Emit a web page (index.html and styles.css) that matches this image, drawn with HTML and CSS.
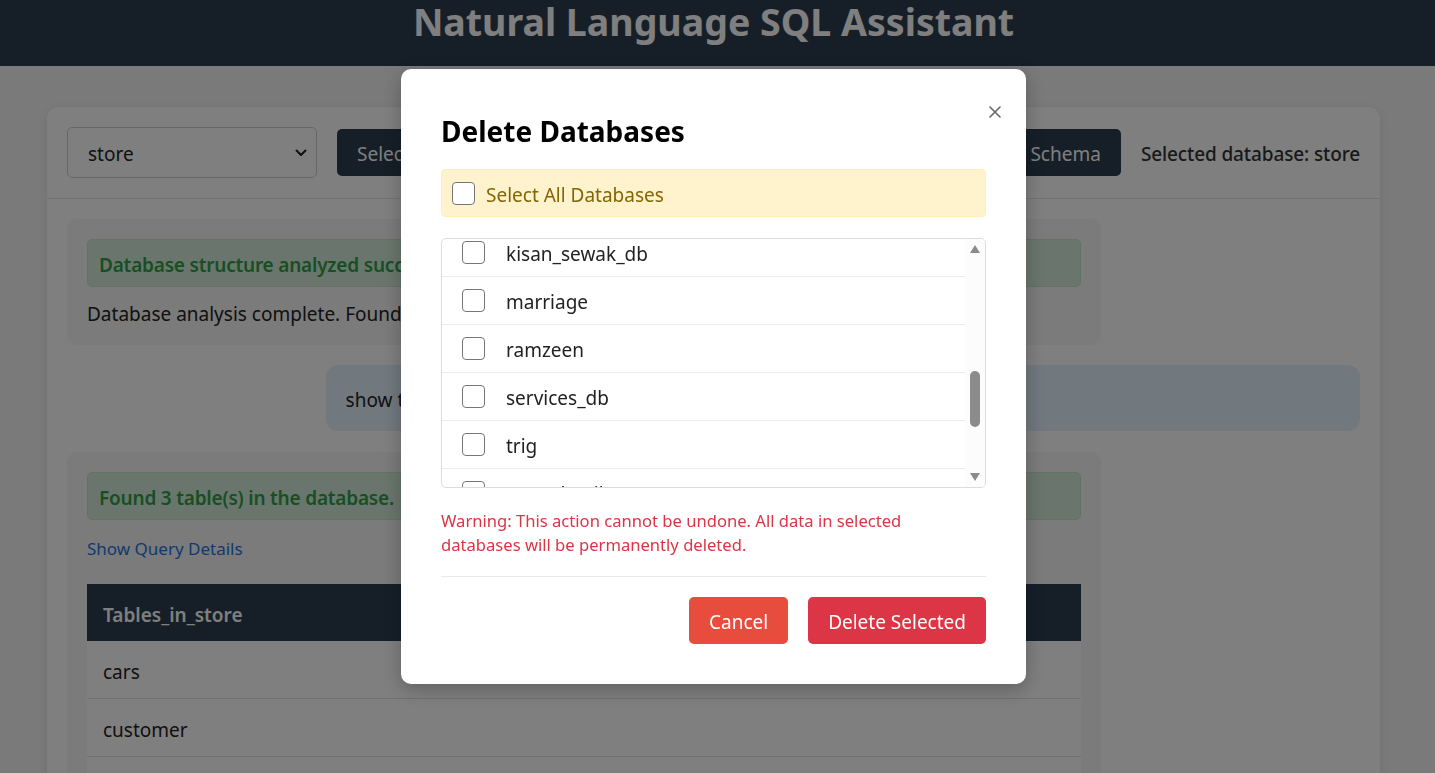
FILE: index.html
```html
<!DOCTYPE html>
<html lang="en">
<head>
<meta charset="utf-8">
<title>Natural Language SQL Assistant</title>
<link rel="stylesheet" href="styles.css">
</head>
<body>
<header class="app-header">
  <h1 class="app-title">Natural Language SQL Assistant</h1>
</header>

<main class="page">
  <section class="panel">
    <div class="toolbar">
      <div class="select-wrap">
        <select class="db-select">
          <option>store</option>
        </select>
        <svg class="select-chevron" width="12" height="8" viewBox="0 0 12 8" aria-hidden="true"><path d="M1.5 1.5 6 6l4.5-4.5" fill="none" stroke="#222" stroke-width="2" stroke-linecap="round" stroke-linejoin="round"/></svg>
      </div>
      <div class="btn-row">
        <button class="btn btn-dark">Select Database</button>
        <button class="btn btn-dark">Delete Databases</button>
        <button class="btn btn-dark btn-push">Analyze Schema</button>
      </div>
      <span class="selected-db">Selected database: store</span>
    </div>

    <div class="chat">
      <div class="msg msg-bot">
        <div class="alert alert-success">Database structure analyzed successfully.</div>
        <p class="msg-text">Database analysis complete. Found 3 tables in the database.</p>
      </div>

      <div class="msg msg-user">show tables</div>

      <div class="msg msg-bot msg-result">
        <div class="alert alert-success">Found 3 table(s) in the database.</div>
        <a class="query-link" href="#">Show Query Details</a>
        <table class="result-table">
          <thead>
            <tr><th>Tables_in_store</th></tr>
          </thead>
          <tbody>
            <tr><td>cars</td></tr>
            <tr><td>customer</td></tr>
            <tr><td>orders</td></tr>
          </tbody>
        </table>
      </div>
    </div>
  </section>
</main>

<div class="overlay">
  <div class="modal">
    <button class="modal-close" aria-label="Close">
      <svg width="12" height="12" viewBox="0 0 12 12" aria-hidden="true"><path d="M1 1l10 10M11 1 1 11" stroke="#666" stroke-width="1.6" stroke-linecap="round"/></svg>
    </button>
    <h2 class="modal-title">Delete Databases</h2>

    <label class="select-all">
      <input type="checkbox" class="check">
      <span class="label-text">Select All Databases</span>
    </label>

    <div class="db-list">
      <div class="db-viewport" id="dbViewport">
        <label class="db-item"><input type="checkbox" class="check"><span class="label-text">bank_db</span></label>
        <label class="db-item"><input type="checkbox" class="check"><span class="label-text">college</span></label>
        <label class="db-item"><input type="checkbox" class="check"><span class="label-text">company</span></label>
        <label class="db-item"><input type="checkbox" class="check"><span class="label-text">demo</span></label>
        <label class="db-item"><input type="checkbox" class="check"><span class="label-text">ecommerce</span></label>
        <label class="db-item"><input type="checkbox" class="check"><span class="label-text">employees</span></label>
        <label class="db-item"><input type="checkbox" class="check"><span class="label-text">hospital</span></label>
        <label class="db-item"><input type="checkbox" class="check"><span class="label-text">hotel</span></label>
        <label class="db-item"><input type="checkbox" class="check"><span class="label-text">inventory</span></label>
        <label class="db-item"><input type="checkbox" class="check"><span class="label-text">jobs</span></label>
        <label class="db-item"><input type="checkbox" class="check"><span class="label-text">kisan_sewak_db</span></label>
        <label class="db-item"><input type="checkbox" class="check"><span class="label-text">marriage</span></label>
        <label class="db-item"><input type="checkbox" class="check"><span class="label-text">ramzeen</span></label>
        <label class="db-item"><input type="checkbox" class="check"><span class="label-text">services_db</span></label>
        <label class="db-item"><input type="checkbox" class="check"><span class="label-text">trig</span></label>
        <label class="db-item"><input type="checkbox" class="check"><span class="label-text">user_details</span></label>
        <label class="db-item"><input type="checkbox" class="check"><span class="label-text">vehicles</span></label>
        <label class="db-item"><input type="checkbox" class="check"><span class="label-text">weather</span></label>
        <label class="db-item"><input type="checkbox" class="check"><span class="label-text">world</span></label>
      </div>
      <div class="scrollbar" aria-hidden="true">
        <span class="sb-btn"><span class="sb-arrow sb-up"></span></span>
        <div class="sb-track" id="sbTrack"><div class="sb-thumb" id="sbThumb"></div></div>
        <span class="sb-btn"><span class="sb-arrow sb-down"></span></span>
      </div>
    </div>

    <p class="warning">Warning: This action cannot be undone. All data in selected databases will be permanently deleted.</p>

    <div class="modal-footer">
      <button class="btn btn-cancel">Cancel</button>
      <button class="btn btn-delete">Delete Selected</button>
    </div>
  </div>
</div>

<script src="script.js"></script>
</body>
</html>
```

FILE: styles.css
```css
* { box-sizing: border-box; }

html, body {
  margin: 0;
  padding: 0;
}

body {
  font-family: "Noto Sans", "Open Sans", "DejaVu Sans", sans-serif;
  font-size: 19px;
  line-height: 26px;
  color: #222;
  background: #f4f4f4;
  overflow: hidden;
  height: 773px;
}

/* Header */
.app-header {
  background: #2c3e50;
  color: #fff;
  text-align: center;
  height: 66px;
  padding-right: 8px;
}
.app-title {
  margin: 0;
  font-size: 37.5px;
  line-height: 44px;
  font-weight: 700;
}

/* Page */
.page {
  padding: 41px 55px 0 47px;
}
.panel {
  background: #fff;
  border-radius: 12px;
  box-shadow: 0 2px 10px rgba(0, 0, 0, 0.08);
}

.toolbar {
  display: flex;
  align-items: center;
  gap: 20px;
  padding: 20px;
  border-bottom: 1px solid #e6e6e6;
}
.select-wrap {
  position: relative;
  width: 250px;
  height: 51px;
  flex: none;
}
.db-select {
  appearance: none;
  -webkit-appearance: none;
  width: 100%;
  height: 100%;
  padding: 2px 20px 0;
  font: inherit;
  color: #222;
  background: #fff;
  border: 1px solid #cfcfcf;
  border-radius: 5px;
}
.select-chevron {
  position: absolute;
  right: 10px;
  top: 22px;
  pointer-events: none;
}
.btn-row {
  display: flex;
  gap: 20px;
  flex: 1;
  min-width: 0;
}
.btn-push { margin-left: auto; }

.btn {
  height: 47px;
  padding: 2px 20px 0;
  border: none;
  border-radius: 5px;
  font: inherit;
  color: #fff;
  white-space: nowrap;
  cursor: pointer;
}
.btn-dark { background: #2c3e50; }
.selected-db {
  flex: none;
  padding-top: 2px;
  color: #333;
  font-weight: 500;
  letter-spacing: -0.12px;
  white-space: nowrap;
}

/* Chat */
.chat {
  display: flex;
  flex-direction: column;
  gap: 20px;
  padding: 20px;
}
.msg {
  width: 80%;
  border-radius: 10px;
  padding: 20px 20px 18px;
}
.msg-bot {
  background: #f6f6f6;
  align-self: flex-start;
}
.msg-result {
  margin-top: 1px;
}
.msg-user {
  background: #e3f2fd;
  align-self: flex-end;
  border-radius: 12px;
  padding: 22px 20px 18px;
}
.alert {
  padding: 12px 11px 8px;
  border-radius: 5px;
  font-weight: 600;
  letter-spacing: -0.2px;
}
.alert-success {
  background: #d4edda;
  border: 1px solid #c3e6cb;
  color: #2f9e47;
}
.msg-text {
  margin: 14px 0 0;
}
.query-link {
  display: block;
  margin: 16px 0 22px;
  font-size: 17px;
  color: #1f74dc;
  text-decoration: none;
  width: max-content;
}
.result-table {
  width: 100%;
  border-collapse: collapse;
  background: #fff;
}
.result-table th {
  background: #2c3e50;
  color: #fff;
  text-align: left;
  font-weight: 600;
  padding: 18px 16px 13px;
  line-height: 26px;
}
.result-table td {
  padding: 18px 16px 13px;
  border-bottom: 1px solid #e3e3e3;
  line-height: 26px;
}

/* Modal */
.overlay {
  position: fixed;
  inset: 0;
  background: rgba(0, 0, 0, 0.5);
  display: flex;
  justify-content: center;
  align-items: flex-start;
  padding: 69px 8px 0 0;
}
.modal {
  position: relative;
  width: 625px;
  background: #fff;
  border-radius: 10px;
  padding: 40px;
  box-shadow: 0 5px 20px rgba(0, 0, 0, 0.25);
}
.modal-close {
  position: absolute;
  top: 37px;
  right: 25px;
  width: 12px;
  height: 12px;
  padding: 0;
  border: none;
  background: none;
  display: flex;
  cursor: pointer;
}
.modal-title {
  margin: 5px 0 0;
  font-size: 28px;
  line-height: 34px;
  font-weight: 700;
  color: #000;
}

.select-all {
  margin-top: 21px;
  display: flex;
  align-items: center;
  gap: 11px;
  height: 48px;
  padding: 0 10px;
  background: #fff3cd;
  border: 1px solid #ffeeba;
  border-radius: 4px;
  color: #856404;
}
.label-text {
  padding-top: 3px;
}

.check {
  appearance: none;
  -webkit-appearance: none;
  width: 23px;
  height: 23px;
  margin: 0;
  flex: none;
  border: 1.5px solid #767676;
  border-radius: 4px;
  background: #fff;
}

.db-list {
  margin-top: 21px;
  height: 250px;
  display: flex;
  border: 1px solid #dcdcdc;
  border-radius: 5px;
  overflow: hidden;
}
.db-viewport {
  flex: 1;
  min-width: 0;
  overflow: hidden;
}
.db-item {
  display: flex;
  align-items: center;
  gap: 21px;
  height: 48px;
  padding: 0 20px;
  border-bottom: 1px solid #ececec;
  color: #222;
}

.scrollbar {
  width: 20px;
  flex: none;
  display: flex;
  flex-direction: column;
  background: #fcfcfc;
}
.sb-btn {
  height: 20px;
  flex: none;
  display: flex;
  align-items: center;
  justify-content: center;
}
.sb-arrow {
  width: 0;
  height: 0;
  border-left: 5.5px solid transparent;
  border-right: 5.5px solid transparent;
}
.sb-up { border-bottom: 8px solid #8b8b8b; }
.sb-down { border-top: 8px solid #8b8b8b; }
.sb-track {
  flex: 1;
  display: flex;
  flex-direction: column;
  align-items: center;
}
.sb-thumb {
  width: 10px;
  background: #8b8b8b;
  border-radius: 5px;
}

.warning {
  margin: 21px 0 0;
  padding-right: 24px;
  font-size: 16.6px;
  line-height: 24px;
  color: #dc3545;
}

.modal-footer {
  margin-top: 19px;
  border-top: 1px solid #e9e9e9;
  padding-top: 20px;
  display: flex;
  justify-content: flex-end;
  gap: 20px;
}
.btn-cancel { background: #e74c3c; }
.btn-delete { background: #dc3545; }
```

FILE: script.js
```js
(function () {
  var view = document.getElementById('dbViewport');
  var track = document.getElementById('sbTrack');
  var thumb = document.getElementById('sbThumb');
  view.scrollTop = 490;
  var trackH = track.clientHeight;
  var ratio = view.clientHeight / view.scrollHeight;
  var thumbH = Math.max(20, trackH * ratio);
  var maxScroll = view.scrollHeight - view.clientHeight;
  var top = maxScroll > 0 ? (view.scrollTop / maxScroll) * (trackH - thumbH) : 0;
  thumb.style.height = thumbH + 'px';
  thumb.style.marginTop = top + 'px';
})();
```
